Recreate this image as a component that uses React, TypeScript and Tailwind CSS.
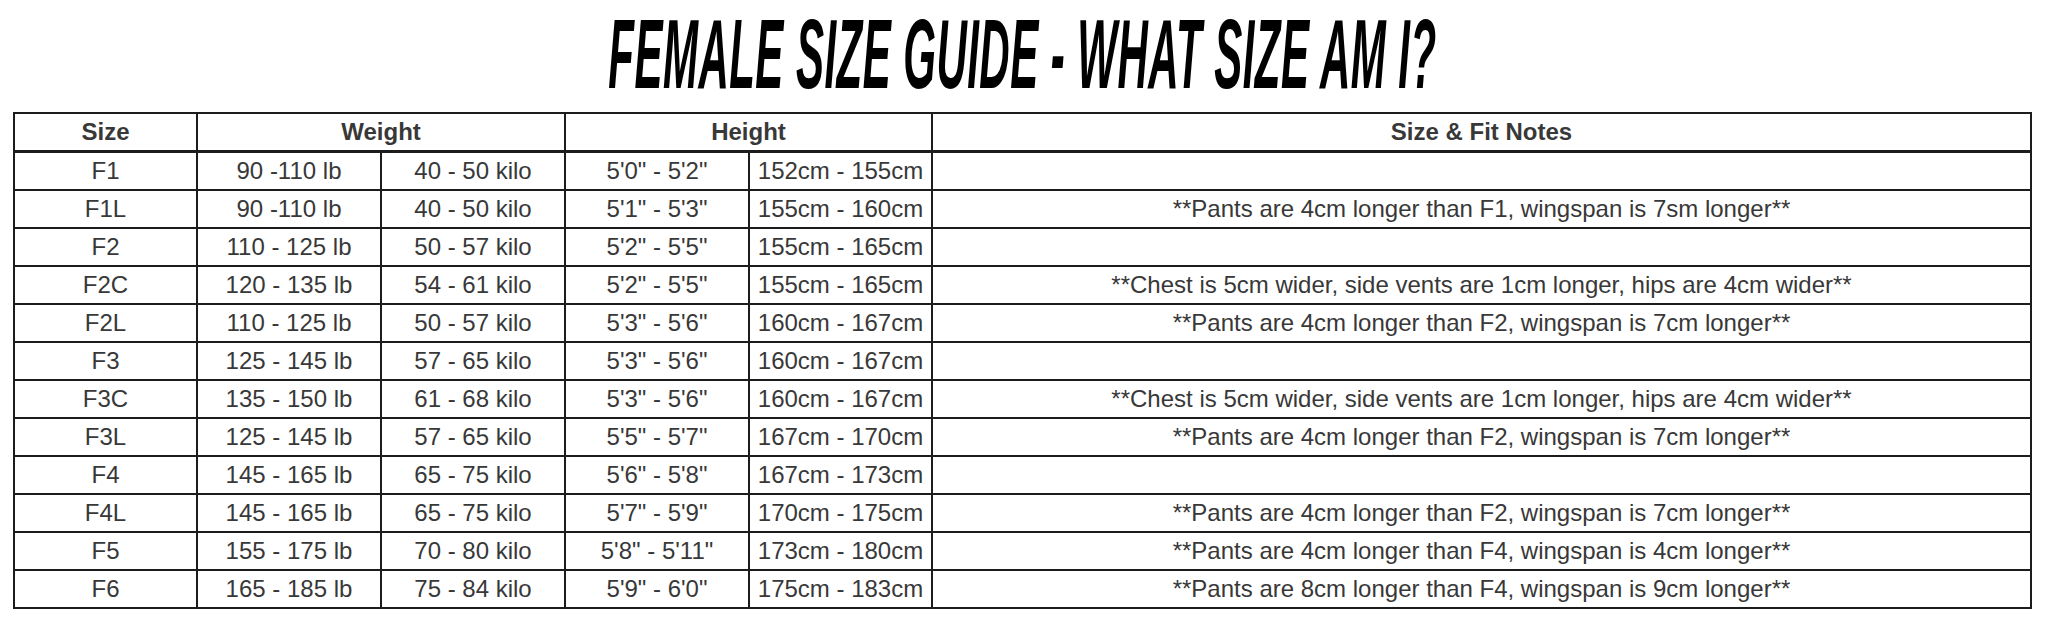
const rows = [
  ['F1', '90 -110 lb', '40 - 50 kilo', `5'0" - 5'2"`, '152cm - 155cm', ''],
  ['F1L', '90 -110 lb', '40 - 50 kilo', `5'1" - 5'3"`, '155cm - 160cm', '**Pants are 4cm longer than F1, wingspan is 7sm longer**'],
  ['F2', '110 - 125 lb', '50 - 57 kilo', `5'2" - 5'5"`, '155cm - 165cm', ''],
  ['F2C', '120 - 135 lb', '54 - 61 kilo', `5'2" - 5'5"`, '155cm - 165cm', '**Chest is 5cm wider, side vents are 1cm longer, hips are 4cm wider**'],
  ['F2L', '110 - 125 lb', '50 - 57 kilo', `5'3" - 5'6"`, '160cm - 167cm', '**Pants are 4cm longer than F2, wingspan is 7cm longer**'],
  ['F3', '125 - 145 lb', '57 - 65 kilo', `5'3" - 5'6"`, '160cm - 167cm', ''],
  ['F3C', '135 - 150 lb', '61 - 68 kilo', `5'3" - 5'6"`, '160cm - 167cm', '**Chest is 5cm wider, side vents are 1cm longer, hips are 4cm wider**'],
  ['F3L', '125 - 145 lb', '57 - 65 kilo', `5'5" - 5'7"`, '167cm - 170cm', '**Pants are 4cm longer than F2, wingspan is 7cm longer**'],
  ['F4', '145 - 165 lb', '65 - 75 kilo', `5'6" - 5'8"`, '167cm - 173cm', ''],
  ['F4L', '145 - 165 lb', '65 - 75 kilo', `5'7" - 5'9"`, '170cm - 175cm', '**Pants are 4cm longer than F2, wingspan is 7cm longer**'],
  ['F5', '155 - 175 lb', '70 - 80 kilo', `5'8" - 5'11"`, '173cm - 180cm', '**Pants are 4cm longer than F4, wingspan is 4cm longer**'],
  ['F6', '165 - 185 lb', '75 - 84 kilo', `5'9" - 6'0"`, '175cm - 183cm', '**Pants are 8cm longer than F4, wingspan is 9cm longer**'],
];

export default function App() {
  return (
    <div className="w-full h-[631px] bg-white pl-[13px] pr-[16px]" style={{ fontFamily: '"Liberation Sans", Arial, sans-serif' }}>
      {/* titolo */}
      <div className="h-[112px] flex items-center justify-center pb-[4px]">
        <h1
          className="text-[99px] leading-[1.1] font-bold italic text-black scale-x-[0.425] whitespace-nowrap tracking-[1px]"
          style={{ fontFamily: '"Liberation Sans Narrow", "Liberation Sans", sans-serif' }}
        >
          FEMALE SIZE GUIDE - WHAT SIZE AM I?
        </h1>
      </div>

      <table className="w-full border-collapse border-2 border-[#1c1c1c] text-[#383838] text-[24px] table-fixed">
        <colgroup>
          <col className="w-[183px]" />
          <col className="w-[184px]" />
          <col className="w-[184px]" />
          <col className="w-[184px]" />
          <col className="w-[183px]" />
          <col />
        </colgroup>
        <thead>
          <tr className="h-[38px] border-b-[3px] border-[#1c1c1c]">
            <th className="border-2 border-[#1c1c1c] font-bold">Size</th>
            <th colSpan={2} className="border-2 border-[#1c1c1c] font-bold">Weight</th>
            <th colSpan={2} className="border-2 border-[#1c1c1c] font-bold">Height</th>
            <th className="border-2 border-[#1c1c1c] font-bold">Size &amp; Fit Notes</th>
          </tr>
        </thead>
        <tbody>
          {rows.map((r) => (
            <tr key={r[0]} className="h-[38px]">
              {r.map((c, i) => (
                <td key={i} className="border-2 border-[#1c1c1c] text-center p-0 leading-none whitespace-nowrap">
                  {c}
                </td>
              ))}
            </tr>
          ))}
        </tbody>
      </table>
    </div>
  );
}
